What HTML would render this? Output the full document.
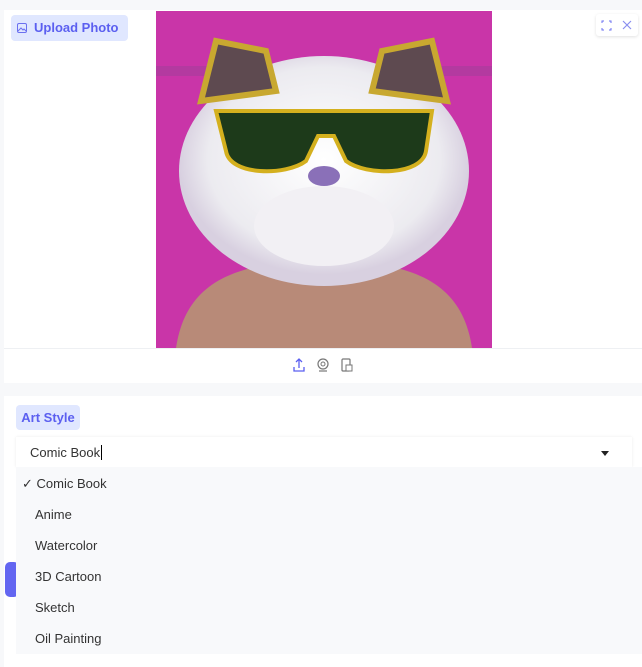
<!DOCTYPE html>
<html><head><style>
body{margin:0;width:642px;height:667px;background:#f7f8fa;font-family:"Liberation Sans",sans-serif;position:relative;overflow:hidden}
.abs{position:absolute}
.panel1{left:4px;top:10px;width:638px;height:372px;background:#fff}
.tb{left:4px;top:348px;width:638px;height:34px;background:#fff;border-top:1px solid #eef0f3}
.panel2{left:4px;top:396px;width:638px;height:271px;background:#fff}
.lab{background:#e0e7ff;color:#5b5ff0;font-weight:bold;font-size:13px;border-radius:4px}
.opt{left:35px;font-size:13px;color:#333}
</style></head><body>
<div class="abs panel1"></div>
<div class="abs lab" style="left:11px;top:15px;height:26px;width:117px;line-height:26px">
<svg class="abs" style="left:6px;top:8px" width="10" height="10" viewBox="0 0 10 10"><rect x=".5" y=".5" width="9" height="9" rx="1.5" fill="none" stroke="#6b70f0"/><path d="M1 8l3-3 2 2 1-1 2 2" fill="none" stroke="#6b70f0"/></svg>
<span style="position:absolute;left:23px">Upload Photo</span></div>
<svg class="abs" style="left:156px;top:11px" width="336" height="337" viewBox="0 0 336 337">
<defs><radialGradient id="f" cx=".5" cy=".45" r=".5"><stop offset="0" stop-color="#fff"/><stop offset=".8" stop-color="#ecebf0"/><stop offset="1" stop-color="#d8d0e0"/></radialGradient></defs>
<rect width="336" height="337" fill="#c935a8"/>
<rect y="55" width="336" height="10" fill="#b33aa0"/>
<path d="M20 337 C30 270 80 250 168 250 C256 250 306 270 316 337Z" fill="#b88a78"/>
<ellipse cx="168" cy="160" rx="145" ry="115" fill="url(#f)"/>
<path d="M45 90 L60 30 L110 40 L120 80Z M291 90 L276 30 L226 40 L216 80Z" fill="#5e4a50" stroke="#c8a830" stroke-width="6"/>
<path d="M60 100 h90 l10 0 h16 l10 0 h90 l-6 40 c-4 25-60 25-80 10 l-12-25 h-16 l-12 25 c-20 15-76 15-80-10z" fill="#1d3a1a" stroke="#d4b01e" stroke-width="4"/>
<ellipse cx="168" cy="165" rx="16" ry="10" fill="#8a70b8"/>
<ellipse cx="168" cy="215" rx="70" ry="40" fill="#f2f0f4"/>
</svg>
<div class="abs" style="left:596px;top:14px;width:42px;height:22px;background:#fff;box-shadow:0 1px 3px rgba(0,0,0,.12);border-radius:3px"></div>
<svg class="abs" style="left:601px;top:20px" width="32" height="11" viewBox="0 0 32 11"><path d="M1 3V1h2M8 1h2v2M10 8v2H8M3 10H1V8" fill="none" stroke="#6b70f0"/><path d="M22 1l8 8M30 1l-8 8" stroke="#8a8ff0" stroke-width="1.2"/></svg>
<div class="abs tb"></div>
<svg class="abs" style="left:293px;top:357px" width="64" height="16" viewBox="0 0 64 16">
<path d="M6 11V2M3 5l3-3 3 3M1 10v4h10v-4" fill="none" stroke="#5b5ff0" stroke-width="1.3"/>
<circle cx="30" cy="7" r="5" fill="none" stroke="#777" stroke-width="1.2"/><circle cx="30" cy="7" r="2" fill="none" stroke="#777"/><path d="M26 14h8" stroke="#777" stroke-width="1.2"/>
<rect x="49" y="2" width="8" height="12" rx="1" fill="none" stroke="#777" stroke-width="1.2"/><rect x="53" y="8" width="6" height="6" fill="#fff" stroke="#777"/>
</svg>
<div class="abs panel2"></div>
<div class="abs lab" style="left:16px;top:405px;height:25px;width:64px;line-height:25px;text-align:center">Art Style</div>
<div class="abs" style="left:16px;top:437px;width:616px;height:30px;background:#fff;box-shadow:0 0 3px rgba(0,0,0,.08)"></div>
<div class="abs" style="left:30px;top:445px;font-size:13px;color:#333">Comic Book<span style="border-left:1px solid #000;margin-left:1px"></span></div>
<div class="abs" style="left:601px;top:451px;width:0;height:0;border-left:4px solid transparent;border-right:4px solid transparent;border-top:5px solid #222"></div>
<div class="abs" style="left:5px;top:562px;width:14px;height:35px;background:#6366f1;border-radius:5px"></div>
<div class="abs" style="left:16px;top:467px;width:626px;height:187px;background:#f8f9fb"></div>
<div class="abs" style="left:22px;top:476px;font-size:13px;color:#333">✓ Comic Book</div>
<div class="abs opt" style="top:507px">Anime</div>
<div class="abs opt" style="top:538px">Watercolor</div>
<div class="abs opt" style="top:569px">3D Cartoon</div>
<div class="abs opt" style="top:600px">Sketch</div>
<div class="abs opt" style="top:631px">Oil Painting</div>
</body></html>
